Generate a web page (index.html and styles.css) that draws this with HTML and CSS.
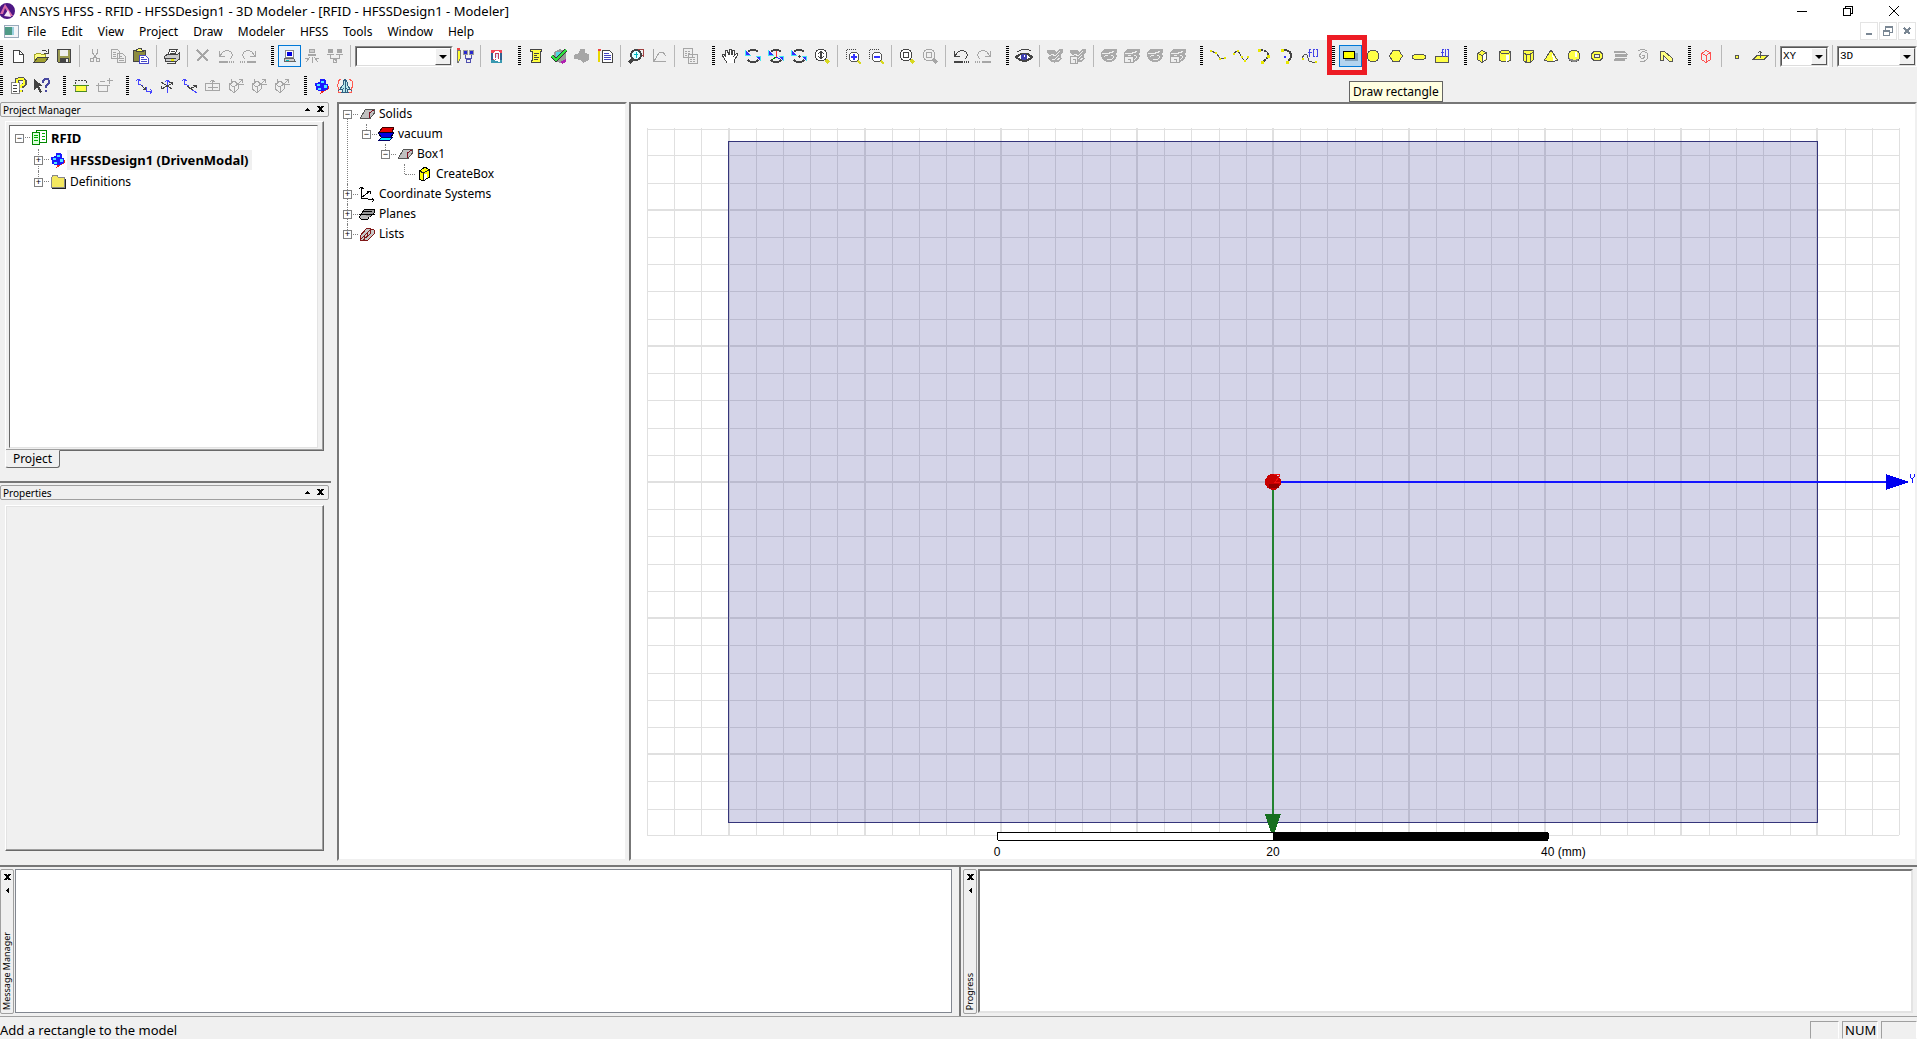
FILE: index.html
```html
<!DOCTYPE html>
<html lang="en">
<head>
<meta charset="utf-8">
<title>ANSYS HFSS - RFID - HFSSDesign1 - 3D Modeler</title>
<link rel="stylesheet" href="styles.css">
</head>
<body>
<svg class="defs" aria-hidden="true">
  <defs>
    <symbol id="new" viewBox="0 0 18 18"><path d="M4.500 3.500H10.500L14.500 7.500V15.500H4.500Z" fill="#fff" stroke="#444"/><path d="M10.500 3.500V7.500H14.500" fill="none" stroke="#444"/></symbol>
    <symbol id="open" viewBox="0 0 18 18"><path d="M2 15V7H4L5 6H8L9 7H13V10" fill="#ffff80" stroke="#a0a030"/><path d="M2 15L6 10H17L13 15Z" fill="#a0a030" stroke="#444"/><path d="M10 4Q13 2 15 5M16 2V6H12" fill="none" stroke="#444"/></symbol>
    <symbol id="save" viewBox="0 0 18 18"><path d="M2.500 2.500H15.500V15.500H3.500L2.500 14.500Z" fill="#9a9a50" stroke="#444"/><path d="M5 3H13V9H5Z" fill="#eee"/><path d="M5 11H14V15H5Z" fill="#444"/><path d="M11 12H13V15H11Z" fill="#eee"/></symbol>
    <symbol id="cut" viewBox="0 0 18 18"><path d="M6.500 2V6L11 12M11.500 2V6L7 12" fill="none" stroke="#a6a6a6"/><circle cx="6" cy="13" r="2" fill="none" stroke="#a6a6a6"/><circle cx="12" cy="13" r="2" fill="none" stroke="#a6a6a6"/></symbol>
    <symbol id="copy" viewBox="0 0 18 18"><path d="M2.500 2.500H8.500L10.500 4.500V11.500H2.500ZM8.500 6.500H13.500L16.500 9.500V15.500H8.500Z" fill="#eee" stroke="#a6a6a6"/><path d="M4 5.500H7M4 7.500H7M4 9.500H7M10 9.500H13M10 11.500H15M10 13.500H15" stroke="#a6a6a6"/></symbol>
    <symbol id="paste" viewBox="0 0 18 18"><path d="M1.500 3.500H13.500V14.500H1.500Z" fill="#8c8c40" stroke="#444"/><path d="M4.500 4.500V3L7 1.500H9L11.500 4.500Z" fill="#ffff60" stroke="#444"/><path d="M7.500 8.500H13.500L16.500 11.500V16.500H7.500Z" fill="#fff" stroke="#4646c8"/><path d="M9 10.500H12M9 12.500H15M9 14.500H15" stroke="#4646c8"/></symbol>
    <symbol id="print" viewBox="0 0 18 18"><path d="M5 8L7 2.500H14L12 8" fill="#fff" stroke="#444"/><path d="M8 4.500H12M7 6.500H12" stroke="#444"/><path d="M1.500 9.500L4 7.500H14L16.500 6V12L13 14.500H2.500Z" fill="#ccc" stroke="#444"/><path d="M2 11.500H13M4 16.500H12L14 14" stroke="#444" fill="none"/><path d="M8 13H11" stroke="#e8e800" stroke-width="2"/></symbol>
    <symbol id="delete" viewBox="0 0 18 18"><path d="M3 3L14 14M14 3L3 14" stroke="#a6a6a6" stroke-width="2"/></symbol>
    <symbol id="undo-g" viewBox="0 0 18 18"><path d="M2.500 4V9.500H8M3 9L6 5Q10 2 14 5Q17 9 13 12" fill="none" stroke="#a6a6a6"/><path d="M2 15H11" stroke="#a6a6a6" stroke-width="2"/><path d="M12 15H18" stroke="#a6a6a6" stroke-width="2" stroke-dasharray="1 1"/></symbol>
    <symbol id="redo-g" viewBox="0 0 18 18"><path d="M15.500 4V9.500H10M15 9L12 5Q8 2 4 5Q1 9 5 12" fill="none" stroke="#a6a6a6"/><path d="M7 15H16" stroke="#a6a6a6" stroke-width="2"/><path d="M0 15H6" stroke="#a6a6a6" stroke-width="2" stroke-dasharray="1 1"/></symbol>
    <symbol id="undo" viewBox="0 0 18 18"><path d="M2.500 4V9.500H8M3 9L6 5Q10 2 14 5Q17 9 13 12" fill="none" stroke="#444"/><path d="M2 15H11" stroke="#444" stroke-width="2"/><path d="M12 15H18" stroke="#444" stroke-width="2" stroke-dasharray="1 1"/></symbol>
    <symbol id="computer" viewBox="0 0 18 18"><path d="M5.500 3.500H13.500V10.500H5.500Z" fill="#fff" stroke="#888"/><path d="M7 5H12V9H7Z" fill="#0000e0"/><path d="M4.500 11.500H13.500L15.500 14.500H4.500Z" fill="#ccc" stroke="#666"/><path d="M6 13.500H9" stroke="#00c0c0"/></symbol>
    <symbol id="remote" viewBox="0 0 18 18"><path d="M6 2H12V6H6ZM5 7H13V9H5Z" fill="#a6a6a6"/><path d="M7 3H11V5H7Z" fill="#ccc"/><path d="M9 10V16M7 10L3 15M11 10L15 15M6 11L2 12M12 11L16 12" stroke="#a6a6a6"/></symbol>
    <symbol id="dist" viewBox="0 0 18 18"><path d="M2 2H7V6H2ZM11 2H16V6H11ZM1 7H8V8H1ZM10 7H17V8H10Z" fill="#a6a6a6"/><path d="M4.500 8V11.500H13.500V8M9 12V14M7.500 12.500H10.500V15.500H7.500Z" fill="none" stroke="#a6a6a6"/></symbol>
    <symbol id="netedit" viewBox="1 0 18 18"><path d="M2 3H5V12L3 16L2 13Z" fill="#ffff30" stroke="#777"/><path d="M2 2H5" stroke="#e44" stroke-width="2"/><path d="M8 3H12V7H8ZM14 3H18V7H14Z" fill="#2828d0" stroke="#999"/><path d="M10.500 8V11.500H16.500V8M13.500 11V13M11.500 12.500H15.500V15.500H11.500Z" fill="none" stroke="#5050b0"/></symbol>
    <symbol id="queue" viewBox="0 0 18 18"><path d="M4 3H15V16H4Z" fill="#306090"/><path d="M4 3H15V6H4Z" fill="#f04858"/><path d="M4 13H15V16H4Z" fill="#3898b0"/><path d="M6 5H13V13H6Z" fill="#f04858"/><path d="M8 4H11L13 6V12L11 14H8L6 12V6Z" fill="#fff"/><path d="M8 6H11V12H8Z" fill="#e0e4f8" stroke="#c04060"/><path d="M9 11L13 15" stroke="#fff" stroke-width="2"/></symbol>
    <symbol id="scroll" viewBox="0 0 18 18"><path d="M3.500 2.500H14.500V4.500H13.500V15.500H4.500V13.500H5.500V4.500H3.500Z" fill="#ffff40" stroke="#444"/><path d="M7 6.500H12M7 8.500H10M7 10.500H12M7 12.500H11" stroke="#444"/></symbol>
    <symbol id="check" viewBox="0 0 18 18"><path d="M4 5L10 2L16 5V12L10 16L4 13Z" fill="#999"/><path d="M6 5H11V10H6Z" fill="#50d8e0"/><path d="M10 15L16 12V15L12 17Z" fill="#b020b0"/><path d="M2 9L6 13L16 3" fill="none" stroke="#333" stroke-width="4"/><path d="M2 9L6 13L16 3" fill="none" stroke="#30e040" stroke-width="2"/></symbol>
    <symbol id="analyze" viewBox="0 0 18 18"><path d="M7 2H12V6L16 7V13L10 16L8 13L1 12V8L6 6Z" fill="#a6a6a6"/></symbol>
    <symbol id="notes" viewBox="0 0 18 18"><path d="M3 3V15" stroke="#e8d800" stroke-width="2"/><path d="M2 3H5" stroke="#e44" stroke-width="2"/><path d="M6.500 3.500H13.500L16.500 6.500V15.500H6.500Z" fill="#fff" stroke="#444"/><path d="M8 6.500H13M8 8.500H15M8 10.500H15M8 12.500H15" stroke="#4444c0"/></symbol>
    <symbol id="sweep" viewBox="0 0 18 18"><path d="M10 2.500H16.500V9L13 7" fill="none" stroke="#a04040"/><circle cx="9" cy="8" r="5" fill="#dff" stroke="#444" stroke-width="2"/><path d="M7 7.500H11M9.500 5V11" stroke="#00b8c0"/><path d="M6 12L2 16" stroke="#444" stroke-width="3"/></symbol>
    <symbol id="graph" viewBox="0 0 18 18"><path d="M3.500 2V14.500H16M4 14L9 6L13 5L16 9" fill="none" stroke="#a6a6a6"/></symbol>
    <symbol id="report" viewBox="0 0 18 18"><path d="M2.500 1.500H11.500V10.500H2.500ZM7.500 7.500H16.500V16.500H7.500Z" fill="#eee" stroke="#a6a6a6"/><path d="M4 4.500H9M4 6.500H9M4 8.500H7M9 10.500H15M9 12.500H15M9 14.500H15" stroke="#a6a6a6" stroke-dasharray="2 1"/></symbol>
    <symbol id="hand" viewBox="0 0 18 18"><path d="M6 16L3 11L1 8L3 7L5 10L4 4L6 3L8 8V2L10 2L11 8L12 3L14 4L13 9L16 6L17 8L13 13V16" fill="#fff" stroke="#444"/></symbol>
    <symbol id="rotate" viewBox="0 0 18 18"><path d="M4 5Q9 0 14 5M4 13Q9 18 14 13" fill="none" stroke="#444" stroke-width="2"/><path d="M1 3V9H7ZM17 15V9H11Z" fill="#45e8f0"/><path d="M2 4V8H6ZM16 14V10H12Z" fill="#3030ff"/></symbol>
    <symbol id="rotate-ax" viewBox="0 0 18 18"><use href="#rotate"/><path d="M9.500 4V10" stroke="#f33"/><path d="M9 10L5 13" stroke="#080"/><path d="M9 10L13 12" stroke="#22f"/></symbol>
    <symbol id="rotate-c" viewBox="0 0 18 18"><use href="#rotate"/><path d="M8 9.500H11M9.500 8V11" stroke="#444"/></symbol>
    <symbol id="zoom" viewBox="0 0 18 18"><circle cx="8" cy="8" r="6" fill="#fff" stroke="#444"/><path d="M8 5V11" stroke="#444" stroke-width="2"/><path d="M5 7L8 4L11 7M5 9L8 12L11 9" stroke="#444" fill="none"/><path d="M13 13L16 16" stroke="#d8d820" stroke-width="3"/></symbol>
    <symbol id="zoomin" viewBox="0 0 18 18"><path d="M2.500 12V2.500H12" fill="none" stroke="#444" stroke-dasharray="1 1"/><circle cx="10" cy="10" r="5" fill="#fff" stroke="#555"/><path d="M7 10H13M10 7V13" stroke="#33f" stroke-width="2"/><path d="M14 14L17 17" stroke="#d8d820" stroke-width="2"/></symbol>
    <symbol id="zoomout" viewBox="0 0 18 18"><path d="M2.500 12V2.500H12" fill="none" stroke="#444" stroke-dasharray="1 1"/><circle cx="10" cy="10" r="5" fill="#fff" stroke="#555"/><path d="M7 10H13" stroke="#33f" stroke-width="2"/><path d="M14 14L17 17" stroke="#d8d820" stroke-width="2"/></symbol>
    <symbol id="fit" viewBox="0 0 18 18"><circle cx="8" cy="8" r="6" fill="#fff" stroke="#444"/><path d="M5.500 5.500H10.500V10.500H5.500Z" fill="none" stroke="#444"/><path d="M13 13L16 16" stroke="#d8d820" stroke-width="3"/></symbol>
    <symbol id="fit-g" viewBox="0 0 18 18"><circle cx="8" cy="8" r="6" fill="none" stroke="#a6a6a6"/><path d="M5.500 5.500H10.500V10.500H5.500Z" fill="none" stroke="#a6a6a6"/><path d="M12 12L16 16" stroke="#a6a6a6" stroke-width="3"/></symbol>
    <symbol id="eye" viewBox="0 0 18 18"><path d="M1 10Q9 3 17 10Q9 18 1 10Z" fill="#fff" stroke="#444" stroke-width="2"/><circle cx="9" cy="10" r="3" fill="#4040b0"/><path d="M9.500 8V10" stroke="#fff"/><path d="M2 5Q9 0 16 4" fill="none" stroke="#444"/></symbol>
    <symbol id="hide" viewBox="0 0 18 18"><path d="M1 3H8L10 5L13 2H17V5L15 7V10L16 12Q11 17 5 15L1 11L4 8L1 6Z" fill="#aaa"/><path d="M4 9L6 7L9 9L14 4M6 12L8 13L13 8M11 13L14 11" fill="none" stroke="#eee"/></symbol>
    <symbol id="hide-box" viewBox="0 0 18 18"><use href="#hide"/><path d="M1.500 9.500H8.500V16.500H1.500ZM4 12.500H6.500V16" fill="#eee" stroke="#a6a6a6"/></symbol>
    <symbol id="eye-g" viewBox="0 0 18 18"><path d="M1 5L5 2H17V5L15 7L17 9Q14 16 8 15Q2 14 1 9Z" fill="#aaa"/><path d="M2 6.500H8L14 4.500M4 10L6 8H12L14 10L12 12L7 13" fill="none" stroke="#eee"/><path d="M8 8H11V11H8Z" fill="#aaa"/></symbol>
    <symbol id="eye-box" viewBox="0 0 18 18"><use href="#eye-g"/><path d="M1.500 9.500H10.500V15.500H1.500ZM5 12.500H7.500V15" fill="#eee" stroke="#a6a6a6"/></symbol>
    <symbol id="line" viewBox="0 0 18 18"><path d="M2 4L7 6L11 11L16 12" fill="none" stroke="#555"/><path d="M1 4H3M6 6H8M10 12H12M15 11H17" stroke="#e8e800" stroke-width="2"/></symbol>
    <symbol id="spline" viewBox="0 0 18 18"><path d="M2 7Q5 1 8 7T13 14L16 11" fill="none" stroke="#444"/><path d="M1 7H3M5 4H7M9 10H11M12 14H14M15 10H17" stroke="#e8e800" stroke-width="2"/></symbol>
    <symbol id="arc" viewBox="0 0 18 18"><path d="M5 3Q14 3 13 10L8 15" fill="none" stroke="#444" stroke-width="2" stroke-dasharray="3 1"/><path d="M3 3H6M12 9H15M6 15H9" stroke="#e8e800" stroke-width="3"/></symbol>
    <symbol id="arc-c" viewBox="0 0 18 18"><path d="M5 3Q14 3 13 10L10 15" fill="none" stroke="#444" stroke-width="2"/><path d="M3 3H6M8 15H11" stroke="#e8e800" stroke-width="3"/><path d="M6 10H8" stroke="#33f" stroke-width="2"/></symbol>
    <symbol id="func" viewBox="0 0 18 18"><path d="M1 11L4 7L6 8L8 14L14 16" fill="none" stroke="#555"/><path d="M1 12H3M14 15H16" stroke="#e8e800" stroke-width="2"/><path d="M10 2.500H8.500V10M7 5.500H11M14 2.500H12.500V9.500H14M15 2.500H16.500V9.500H15" fill="none" stroke="#4545e8"/></symbol>
    <symbol id="rect" viewBox="0 0 18 18"><path d="M4 6H17V14H4Z" fill="#7f9fba"/><path d="M2.500 4.500H13.500V11.500H2.500Z" fill="#ff0" stroke="#000"/></symbol>
    <symbol id="circle" viewBox="0 0 18 18"><circle cx="9" cy="9" r="6" fill="#ffff45" stroke="#555"/></symbol>
    <symbol id="poly" viewBox="0 0 18 18"><path d="M6 3.500H12L15.500 9L12 14.500H6L2.500 9Z" fill="#ffff45" stroke="#555"/></symbol>
    <symbol id="ellipse" viewBox="0 0 18 18"><ellipse cx="9" cy="10" rx="7" ry="3" fill="#ffff45" stroke="#555"/></symbol>
    <symbol id="funcrect" viewBox="0 0 18 18"><path d="M2.500 9.500H15.500V15.500H2.500Z" fill="#ffff45" stroke="#555"/><path d="M11 2.500H9.500V10M8 5.500H11M13 2.500H12.500V9.500H13M14 2.500H15.500V9.500H14" fill="none" stroke="#4545e8"/></symbol>
    <symbol id="box" viewBox="0 0 18 18"><path d="M4.500 6.500L9 3.500L13.500 5.500V12.500L9 15.500L4.500 12.500Z" fill="#ffff45" stroke="#555"/><path d="M9 8V15L13 12V6Z" fill="#fff"/><path d="M4.500 6.500L9 8.500L13.500 5.500M9 8V15" fill="none" stroke="#555"/></symbol>
    <symbol id="cyl" viewBox="0 0 18 18"><path d="M3.500 5Q9 1 14.500 5V13Q9 17 3.500 13Z" fill="#ffff45" stroke="#555"/><path d="M10 8H13V13L10 15Z" fill="#fff"/><path d="M3.500 5Q9 9 14.500 5" fill="none" stroke="#555"/></symbol>
    <symbol id="prism" viewBox="0 0 18 18"><path d="M4 3.500H14V13L11 15.500H7L4 13Z" fill="#ffff45" stroke="#555"/><path d="M4 5L7 7.500H11L14 5M7.500 8V15M11.500 8V15" fill="none" stroke="#555"/></symbol>
    <symbol id="cone" viewBox="0 0 18 18"><path d="M9 3L15.500 13Q9 17 2.500 13Z" fill="#ffff45" stroke="#555"/><path d="M10 6L14 13L11 14Z" fill="#fff"/></symbol>
    <symbol id="sphere" viewBox="0 0 18 18"><circle cx="9" cy="9" r="6" fill="#ffff45" stroke="#555"/><path d="M10 5H12V10H10Z" fill="#fff"/><path d="M4 12Q8 15 13 13" fill="none" stroke="#888" stroke-width="2"/></symbol>
    <symbol id="torus" viewBox="0 0 18 18"><ellipse cx="9" cy="9" rx="6" ry="5" fill="#ffff45" stroke="#555"/><ellipse cx="9" cy="9" rx="3" ry="2" fill="#eee" stroke="#555"/></symbol>
    <symbol id="helix" viewBox="0 0 18 18"><path d="M3 5H14M4 9H16M3 13H14" stroke="#a6a6a6" stroke-width="2"/><path d="M14 5L16 7L4 7M14 11L16 11L4 11" fill="none" stroke="#a6a6a6"/></symbol>
    <symbol id="spiral" viewBox="0 0 18 18"><path d="M8 9Q10 7 11 9Q10 12 7 11Q4 8 8 5Q14 4 14 9Q13 15 6 15" fill="none" stroke="#a6a6a6"/><path d="M4 4Q9 1 13 4" fill="none" stroke="#a6a6a6"/></symbol>
    <symbol id="bond" viewBox="0 0 18 18"><path d="M3.500 13V4H7L15 11V14H12L6 8V13Z" fill="#ffff80" stroke="#555"/></symbol>
    <symbol id="region" viewBox="0 0 18 18"><path d="M4.500 6.500L9 3.500L13.500 5.500V12.500L9 15.500L4.500 12.500ZM4.500 6.500L9 8.500L13.500 5.500M9 8V15" fill="none" stroke="#ff5050"/></symbol>
    <symbol id="point" viewBox="0 0 18 18"><circle cx="9" cy="10" r="2" fill="#ffff45" stroke="#555"/></symbol>
    <symbol id="plane" viewBox="0 0 18 18"><path d="M2 12.500L6 8.500H17L13 12.500Z" fill="#ffff45" stroke="#555"/><path d="M9.500 11V4M7 6L9 4L11 6" fill="none" stroke="#555"/></symbol>
    <symbol id="help" viewBox="0 0 18 18"><path d="M2.500 5.500H10V16.500H2.500Z" fill="#fff" stroke="#888"/><path d="M4 8.500H8M4 11.500H8M4 14.500H8" stroke="#444"/><path d="M8 6V3L10 2H14L16 4V7L13 9V11M12 13V15" fill="none" stroke="#555" stroke-width="4"/><path d="M8 6V3L10 2H14L15 4V7L12 9V11M12 13V15" fill="none" stroke="#ffff30" stroke-width="2"/></symbol>
    <symbol id="whats" viewBox="0 0 18 18"><path d="M2 2V13L5 10L8 16L10 15L7 9H11Z" fill="#444"/><path d="M11 6V4L13 2H16L17 4V6L14 9V11M14 13V15" fill="none" stroke="#4848a0" stroke-width="2"/></symbol>
    <symbol id="mat" viewBox="0 0 18 18"><path d="M3.500 7V3.500H14.500V7" fill="none" stroke="#444" stroke-dasharray="2 1"/><path d="M3 8H15V15H3Z" fill="#ffff45"/><path d="M1 8.500H17M3 14.500H15" stroke="#4a8a20"/><path d="M3.500 9V14M14.500 9V14" stroke="#777"/></symbol>
    <symbol id="mat-g" viewBox="0 0 18 18"><path d="M3.500 6V14.500H12.500V9M5 4.500H10M1 8.500H15M14.500 1V7M12 3.500H18" fill="none" stroke="#a6a6a6"/></symbol>
    <symbol id="cs1" viewBox="0 0 18 18"><path d="M3.500 2V7.500L8 8.500M1 4L3 2L6 4M11.500 10V14.500H17M15 12L17 14L15 17" fill="none" stroke="#4545ff"/><path d="M6 8L11 13M8 12.500H10.500V10" fill="none" stroke="#444"/></symbol>
    <symbol id="cs2" viewBox="0 0 18 18"><path d="M9.500 16V3M7 5L9 3L12 5" fill="none" stroke="#4545ff"/><path d="M3 5L14 12M3 12L15 6M11 5.500H14.500V8M3.500 9V11.500H6" fill="none" stroke="#444"/></symbol>
    <symbol id="cs3" viewBox="0 0 18 18"><path d="M3.500 2V7.500L8 8.500M1 4L3 2L6 4M10 12L16 16" fill="none" stroke="#4545ff"/><path d="M6 9L12 13M8 12L15 9M12 8.500H15.500V11" fill="none" stroke="#444"/></symbol>
    <symbol id="cs-face" viewBox="0 0 18 18"><path d="M1.500 6.500H15.500V13.500H1.500ZM8.500 14V3M6 5L8 3L11 5M4 10.500H14" fill="none" stroke="#a6a6a6"/></symbol>
    <symbol id="cs-g" viewBox="0 0 18 18"><path d="M2.500 7L7 4L11 7V12L7 16L2.500 12ZM2 7L7 10L11 7M7 10V16M10 8L16 2M12 2.500H15.500V6M4.500 2V7M17 7.500H11" fill="none" stroke="#a6a6a6"/></symbol>
    <symbol id="cubes" viewBox="0 0 18 18"><path d="M7 17L16 12V9L9 13Z" fill="#e22"/><path d="M7 2H12L13 4V7H15V12L11 14H6L3 13V9H2V6L7 5Z" fill="#1a1aff"/><path d="M8 4H11V6H8ZM4 7H7V9H4ZM11 8H14V11H11ZM5 11H8V13H5Z" fill="#50e8ff"/></symbol>
    <symbol id="plane3d" viewBox="0 0 18 18"><path d="M5 2L2 4V7L1 8L3 12L2 15L5 16M13 2L16 4V7L17 9L15 12L16 15L13 16" fill="none" stroke="#ff5a50"/><path d="M9 2L11 5V8L15 13L11 12L12 15H6L7 12L3 13L7 8V5Z" fill="#b8e8ec" stroke="#306080"/><path d="M9.500 3V15" stroke="#306080"/></symbol>
    <symbol id="t-project" viewBox="0 0 18 18"><path d="M6.500 1.500H16.500V13.500H6.500Z" fill="#fff" stroke="#080"/><path d="M2.500 3.500H9.500V15.500H2.500Z" fill="#dfd" stroke="#080"/><path d="M4 6.500H8M4 8.500H8M4 11.500H8M12 4.500H15M12 7.500H15M12 10.500H15" stroke="#00b000"/></symbol>
    <symbol id="t-folder" viewBox="0 0 18 18"><path d="M2.500 14.500V4.500L4 2.500H8L9.500 4.500H15.500V14.500Z" fill="#f4e860" stroke="#888"/><path d="M3 15.500H16.500V6" stroke="#222" fill="none"/></symbol>
    <symbol id="t-solid" viewBox="0 0 18 18"><path d="M2.500 12.500L7.500 4.500H16.500V8L12 13.500H2.500Z" fill="#c0c0c0" stroke="#555"/><path d="M11 13V8L16 5" fill="none" stroke="#801020"/></symbol>
    <symbol id="t-vac" viewBox="0 0 18 18"><path d="M2 7L6 2H17L15 7Z" fill="#e00000" stroke="#400"/><path d="M1 7H14L17 8L14 12H4Z" fill="#0000e0" stroke="#002"/><path d="M2 15L5 12H16L13 15Z" fill="#00f0ff" stroke="#006"/></symbol>
    <symbol id="t-box" viewBox="0 0 18 18"><path d="M4.500 6L10 2L14.500 5V12L8 16L4.500 14Z" fill="#ff0" stroke="#000"/><path d="M9 9H12V13L9 15Z" fill="#fff"/><path d="M5 6L8 8L14 5M8.500 8V15" fill="none" stroke="#222"/></symbol>
    <symbol id="t-cs" viewBox="0 0 18 18"><path d="M3.500 2V13L16 15M3 13L12 6M1 4L3 2L6 4M9 6.500H12.500V9M14 13L16 15L14 17" fill="none" stroke="#000"/></symbol>
    <symbol id="t-planes" viewBox="0 0 18 18"><path d="M1 12L5 8H13L10 14H3Z" fill="#bbb" stroke="#000"/><path d="M3 9L7 4H16V8L12 12" fill="#999" stroke="#000"/><path d="M1 9.500H17M5 6.500H14" stroke="#000"/></symbol>
    <symbol id="t-lists" viewBox="0 0 18 18"><path d="M2 11L9 3L16 5V9L9 16L2 15Z" fill="#c8c8c8" stroke="#801818"/><path d="M3 14L13 4M6 11L7 15M9 8L10 12M12 5V9L5 15" stroke="#801818" fill="none"/></symbol>
  </defs>
</svg>

<header class="titlebar">
  <svg class="logo" viewBox="0 0 16 18"><circle cx="7" cy="9" r="8" fill="#4c1684"/><path d="M0 12L5 2L13 14H10L5 6L3 12Z" fill="#d76aa8"/><path d="M4 14L8 8L11 15Z" fill="#f5e7f5"/></svg>
  <h1 class="title">ANSYS HFSS - RFID - HFSSDesign1 - 3D Modeler - [RFID - HFSSDesign1 - Modeler]</h1>
  <div class="winbtns">
    <button aria-label="Minimize"><svg viewBox="0 0 12 12"><path d="M1 6.500H11" stroke="#000"/></svg></button>
    <button aria-label="Restore"><svg viewBox="0 0 12 12"><path d="M1.500 3.500H8.500V10.500H1.500ZM3.500 3V1.500H10.500V8.500H9" fill="none" stroke="#000"/></svg></button>
    <button aria-label="Close"><svg class="smooth" viewBox="0 0 12 12"><path d="M1 1L11 11M11 1L1 11" stroke="#000"/></svg></button>
  </div>
</header>

<nav class="menubar">
  <svg class="docicon" viewBox="0 0 16 14"><path d="M1 1H15V13H1Z" fill="#f4f4f8" stroke="#9ab"/><path d="M2 3H9V11H2Z" fill="#4f9a86"/><path d="M9 3H11V11H9Z" fill="#9ad0e0"/></svg>
  <button>File</button><button>Edit</button><button>View</button><button>Project</button><button>Draw</button><button>Modeler</button><button>HFSS</button><button>Tools</button><button>Window</button><button>Help</button>
  <div class="mdibtns">
    <button aria-label="Minimize document"><svg viewBox="0 0 12 12"><path d="M3 9H9" stroke="#7a8794" stroke-width="2"/></svg></button>
    <button aria-label="Restore document"><svg viewBox="0 0 12 12"><path d="M1.500 5.500H7.500V10.500H1.500ZM3.500 5V2.500H10.500V7.500H8" fill="none" stroke="#7a8794"/><path d="M3 2H11M1 5.500H8" stroke="#7a8794" stroke-width="2"/></svg></button>
    <button aria-label="Close document"><svg viewBox="0 0 12 12"><path d="M3 3L9 9M9 3L3 9" stroke="#7a8794" stroke-width="2"/></svg></button>
  </div>
</nav>

<div class="toolbars">
  <div class="toolrow">
    <div class="group"><i class="grip"></i>
      <button class="tool" aria-label="New"><svg><use href="#new"/></svg></button><button class="tool" aria-label="Open"><svg><use href="#open"/></svg></button><button class="tool" aria-label="Save"><svg><use href="#save"/></svg></button><i class="sep"></i>
      <button class="tool" aria-label="Cut"><svg><use href="#cut"/></svg></button><button class="tool" aria-label="Copy"><svg><use href="#copy"/></svg></button><button class="tool" aria-label="Paste"><svg><use href="#paste"/></svg></button><i class="sep"></i>
      <button class="tool" aria-label="Print"><svg><use href="#print"/></svg></button><i class="sep"></i>
      <button class="tool" aria-label="Delete"><svg><use href="#delete"/></svg></button><button class="tool" aria-label="Undo"><svg><use href="#undo-g"/></svg></button><button class="tool" aria-label="Redo"><svg><use href="#redo-g"/></svg></button>
    </div>
    <div class="group"><i class="grip"></i>
      <button class="tool local" aria-label="Local machine"><svg><use href="#computer"/></svg></button><button class="tool" aria-label="Remote"><svg><use href="#remote"/></svg></button><button class="tool" aria-label="Distributed"><svg><use href="#dist"/></svg></button><i class="sep"></i>
      <span class="combo machine"><select aria-label="Machine"><option></option></select></span>
      <button class="tool" aria-label="Edit distributed machines"><svg><use href="#netedit"/></svg></button><i class="sep"></i><button class="tool" aria-label="Queue"><svg><use href="#queue"/></svg></button>
    </div>
    <div class="group"><i class="grip"></i>
      <button class="tool" aria-label="Setup"><svg><use href="#scroll"/></svg></button><button class="tool" aria-label="Validate"><svg><use href="#check"/></svg></button><button class="tool" aria-label="Analyze all"><svg><use href="#analyze"/></svg></button><button class="tool" aria-label="Edit notes"><svg><use href="#notes"/></svg></button><i class="sep"></i>
      <button class="tool" aria-label="Solution data"><svg><use href="#sweep"/></svg></button><button class="tool" aria-label="Results"><svg><use href="#graph"/></svg></button><i class="sep"></i><button class="tool" aria-label="Copy image"><svg><use href="#report"/></svg></button>
    </div>
    <div class="group"><i class="grip"></i>
      <button class="tool" aria-label="Pan"><svg><use href="#hand"/></svg></button><button class="tool" aria-label="Rotate model"><svg><use href="#rotate"/></svg></button><button class="tool" aria-label="Rotate axis"><svg><use href="#rotate-ax"/></svg></button><button class="tool" aria-label="Rotate screen"><svg><use href="#rotate-c"/></svg></button><button class="tool" aria-label="Zoom"><svg><use href="#zoom"/></svg></button><i class="sep"></i>
      <button class="tool" aria-label="Zoom in"><svg><use href="#zoomin"/></svg></button><button class="tool" aria-label="Zoom out"><svg><use href="#zoomout"/></svg></button><i class="sep"></i>
      <button class="tool" aria-label="Fit all"><svg><use href="#fit"/></svg></button><button class="tool" aria-label="Fit selection"><svg><use href="#fit-g"/></svg></button><i class="sep"></i>
      <button class="tool" aria-label="Undo view"><svg><use href="#undo"/></svg></button><button class="tool" aria-label="Redo view"><svg><use href="#redo-g"/></svg></button>
    </div>
    <div class="group"><i class="grip"></i>
      <button class="tool" aria-label="Visibility"><svg><use href="#eye"/></svg></button><i class="sep"></i>
      <button class="tool" aria-label="Hide"><svg><use href="#hide"/></svg></button><button class="tool" aria-label="Hide in all views"><svg><use href="#hide-box"/></svg></button><i class="sep"></i>
      <button class="tool" aria-label="Show"><svg><use href="#eye-g"/></svg></button><button class="tool" aria-label="Show in all views"><svg><use href="#eye-box"/></svg></button><button class="tool" aria-label="Show all"><svg><use href="#eye-g"/></svg></button><button class="tool" aria-label="Show all in all views"><svg><use href="#eye-box"/></svg></button>
    </div>
    <div class="group"><i class="grip"></i>
      <button class="tool" aria-label="Line"><svg><use href="#line"/></svg></button><button class="tool" aria-label="Spline"><svg><use href="#spline"/></svg></button><button class="tool" aria-label="Three point arc"><svg><use href="#arc"/></svg></button><button class="tool" aria-label="Center arc"><svg><use href="#arc-c"/></svg></button><button class="tool" aria-label="Equation curve"><svg><use href="#func"/></svg></button>
    </div>
    <div class="group"><i class="grip"></i>
      <span class="callout"><button class="tool active" aria-describedby="tip" aria-label="Rectangle"><svg><use href="#rect"/></svg></button><span class="tooltip" id="tip" role="tooltip">Draw rectangle</span></span><button class="tool" aria-label="Circle"><svg><use href="#circle"/></svg></button><button class="tool" aria-label="Regular polygon"><svg><use href="#poly"/></svg></button><button class="tool" aria-label="Ellipse"><svg><use href="#ellipse"/></svg></button><button class="tool" aria-label="Equation surface"><svg><use href="#funcrect"/></svg></button>
    </div>
    <div class="group"><i class="grip"></i>
      <button class="tool" aria-label="Box"><svg><use href="#box"/></svg></button><button class="tool" aria-label="Cylinder"><svg><use href="#cyl"/></svg></button><button class="tool" aria-label="Regular polyhedron"><svg><use href="#prism"/></svg></button><button class="tool" aria-label="Cone"><svg><use href="#cone"/></svg></button><button class="tool" aria-label="Sphere"><svg><use href="#sphere"/></svg></button><button class="tool" aria-label="Torus"><svg><use href="#torus"/></svg></button><button class="tool" aria-label="Helix"><svg><use href="#helix"/></svg></button><button class="tool" aria-label="Spiral"><svg><use href="#spiral"/></svg></button><button class="tool" aria-label="Bondwire"><svg><use href="#bond"/></svg></button>
    </div>
    <div class="group last"><i class="grip"></i>
      <button class="tool" aria-label="Region"><svg><use href="#region"/></svg></button><i class="sep"></i>
      <button class="tool" aria-label="Point"><svg><use href="#point"/></svg></button><button class="tool" aria-label="Plane"><svg><use href="#plane"/></svg></button><i class="sep"></i>
      <span class="combo axis"><select aria-label="Drawing plane"><option>XY</option></select></span><i class="sep"></i>
      <span class="combo mode"><select aria-label="Movement mode"><option>3D</option></select></span>
    </div>
  </div>
  <div class="toolrow">
    <div class="group"><i class="grip"></i><button class="tool" aria-label="Help topics"><svg><use href="#help"/></svg></button><button class="tool" aria-label="What's this"><svg><use href="#whats"/></svg></button></div>
    <div class="group"><i class="grip"></i><button class="tool" aria-label="Layer"><svg><use href="#mat"/></svg></button><button class="tool" aria-label="Add layer"><svg><use href="#mat-g"/></svg></button></div>
    <div class="group"><i class="grip"></i><button class="tool" aria-label="Offset coordinate system"><svg><use href="#cs1"/></svg></button><button class="tool" aria-label="Rotated coordinate system"><svg><use href="#cs2"/></svg></button><button class="tool" aria-label="Offset and rotated"><svg><use href="#cs3"/></svg></button><button class="tool" aria-label="Face coordinate system"><svg><use href="#cs-face"/></svg></button><button class="tool" aria-label="Object offset"><svg><use href="#cs-g"/></svg></button><button class="tool" aria-label="Object rotated"><svg><use href="#cs-g"/></svg></button><button class="tool" aria-label="Object both"><svg><use href="#cs-g"/></svg></button></div>
    <div class="group"><i class="grip"></i><button class="tool" aria-label="Insert HFSS design"><svg><use href="#cubes"/></svg></button><button class="tool" aria-label="Insert HFSS-IE design"><svg><use href="#plane3d"/></svg></button></div>
  </div>
</div>

<main class="workspace">
  <div class="leftdock">
    <section class="dock project">
      <h2 class="caption">Project Manager<span class="capbtns"><button aria-label="Collapse"><svg viewBox="0 0 9 9"><path d="M2 6H7L4.500 3Z"/></svg></button><button aria-label="Close"><svg viewBox="0 0 9 9"><path d="M2 1L7 7M7 1L2 7" stroke="#000" stroke-width="2"/></svg></button></span></h2>
      <div class="tabpage">
        <div class="treebox">
          <ul class="tree big">
            <li><div class="row"><button class="toggle" aria-label="Collapse RFID">−</button><svg><use href="#t-project"/></svg><span class="bold">RFID</span></div>
              <ul>
                <li><div class="row"><button class="toggle" aria-label="Expand HFSSDesign1">+</button><svg><use href="#cubes"/></svg><span class="bold picked">HFSSDesign1 (DrivenModal)</span></div></li>
                <li><div class="row"><button class="toggle" aria-label="Expand Definitions">+</button><svg><use href="#t-folder"/></svg><span>Definitions</span></div></li>
              </ul>
            </li>
          </ul>
        </div>
      </div>
      <button class="tab">Project</button>
    </section>
    <section class="dock props">
      <h2 class="caption">Properties<span class="capbtns"><button aria-label="Collapse"><svg viewBox="0 0 9 9"><path d="M2 6H7L4.500 3Z"/></svg></button><button aria-label="Close"><svg viewBox="0 0 9 9"><path d="M2 1L7 7M7 1L2 7" stroke="#000" stroke-width="2"/></svg></button></span></h2>
      <div class="propbox"></div>
    </section>
  </div>
  <section class="modeltree">
    <ul class="tree">
      <li><div class="row"><button class="toggle" aria-label="Collapse Solids">−</button><svg><use href="#t-solid"/></svg><span>Solids</span></div>
        <ul><li><div class="row"><button class="toggle" aria-label="Collapse vacuum">−</button><svg><use href="#t-vac"/></svg><span>vacuum</span></div>
          <ul><li><div class="row"><button class="toggle" aria-label="Collapse Box1">−</button><svg><use href="#t-solid"/></svg><span>Box1</span></div>
            <ul><li><div class="row leaf"><svg><use href="#t-box"/></svg><span>CreateBox</span></div></li></ul>
          </li></ul>
        </li></ul>
      </li>
      <li><div class="row"><button class="toggle" aria-label="Expand Coordinate Systems">+</button><svg><use href="#t-cs"/></svg><span>Coordinate Systems</span></div></li>
      <li><div class="row"><button class="toggle" aria-label="Expand Planes">+</button><svg><use href="#t-planes"/></svg><span>Planes</span></div></li>
      <li><div class="row"><button class="toggle" aria-label="Expand Lists">+</button><svg><use href="#t-lists"/></svg><span>Lists</span></div></li>
    </ul>
  </section>
  <section class="canvas">
    <svg class="scene" viewBox="0 0 1284 755" role="img" aria-label="Top view of Box1">
      <defs>
        <g id="vlines" fill="none" stroke="#e0e0e0">
          <path d="M27-354V353M54-354V353M82-354V353M109-354V353M163-354V353M191-354V353M218-354V353M245-354V353M299-354V353M327-354V353M354-354V353M381-354V353M436-354V353M463-354V353M490-354V353M517-354V353M572-354V353M599-354V353M626-354V353"/>
          <path stroke-width="2" d="M136-354V353M272-354V353M408-354V353M544-354V353"/>
        </g>
        <g id="hlines" fill="none" stroke="#e0e0e0">
          <path d="M-626 27H626M-626 54H626M-626 82H626M-626 109H626M-626 163H626M-626 191H626M-626 218H626M-626 245H626M-626 299H626M-626 327H626M-626 353H626"/>
          <path stroke-width="2" d="M-626 136H626M-626 272H626"/>
        </g>
      </defs>
      <g transform="translate(642 378)">
        <use href="#vlines"/><use href="#vlines" transform="scale(-1 1)"/>
        <use href="#hlines"/><use href="#hlines" transform="scale(1 -1)"/>
        <path d="M0-354V353M-626 0H626" stroke="#e0e0e0" stroke-width="2"/>
        <rect x="-545" y="-341" width="1089" height="681" fill="#28288c" fill-opacity=".2" stroke="#35357a"/>
        <path d="M0 0V336" stroke="#238230" stroke-width="2"/>
        <path d="M-8 332H8L2 350H-2Z" fill="#17701f"/>
        <path d="M0 0H614" stroke="#1414ff" stroke-width="2"/>
        <path d="M613-8V8L636 0Z" fill="#0000f0"/>
        <path d="M637-8V-5L639-3V1M641-8V-5L639-3" fill="none" stroke="#1414ff"/>
        <circle r="8" fill="#c80000"/><path d="M-4 2H6V6H-4Z" fill="#900000"/>
        <path d="M1-8H6V-5L2 0H7" fill="none" stroke="#f01010"/>
      </g>
      <rect x="366" y="728" width="551" height="8" rx="1" fill="#fff" stroke="#000"/>
      <path d="M642 728H917V737H642Z"/>
      <g class="scale"><text x="366" y="752" text-anchor="middle">0</text><text x="642" y="752" text-anchor="middle">20</text><text x="910" y="752">40 (mm)</text></g>
    </svg>
  </section>
</main>

<div class="bottomdock">
  <section class="vdock messages">
    <div class="vcaption"><button aria-label="Close"><svg viewBox="0 0 9 9"><path d="M2 1L7 7M7 1L2 7" stroke="#000" stroke-width="2"/></svg></button><button aria-label="Collapse"><svg viewBox="0 0 9 9"><path d="M6 2V7L3 4.500Z"/></svg></button><h2>Message Manager</h2></div>
    <div class="output flat"></div>
  </section>
  <section class="vdock progress">
    <div class="vcaption"><button aria-label="Close"><svg viewBox="0 0 9 9"><path d="M2 1L7 7M7 1L2 7" stroke="#000" stroke-width="2"/></svg></button><button aria-label="Collapse"><svg viewBox="0 0 9 9"><path d="M6 2V7L3 4.500Z"/></svg></button><h2>Progress</h2></div>
    <div class="output"></div>
  </section>
</div>

<footer class="status">
  <p>Add a rectangle to the model</p>
  <span class="cell small"></span><span class="cell">NUM</span><span class="cell"></span>
</footer>
</body>
</html>
```
FILE: styles.css
```css
*, *::before, *::after { box-sizing: border-box; }
html, body { height: 100%; }
body {
  margin: 0;
  display: flex;
  flex-direction: column;
  background: #f0f0f0;
  color: #000;
  font: 12px/16px "Noto Sans", "Open Sans", sans-serif;
  overflow: hidden;
}
button {
  margin: 0; padding: 0; border: 0;
  background: none; color: inherit; font: inherit;
}
svg { display: block; flex: none; shape-rendering: crispEdges; }
h1, h2, p, ul { margin: 0; padding: 0; font-weight: normal; list-style: none; }
.smooth { shape-rendering: auto; }
.defs { position: absolute; width: 0; height: 0; }

/* Title and menu */
.titlebar { display: flex; align-items: center; height: 22px; background: #fff; }
.logo { width: 16px; height: 18px; margin-right: 4px; shape-rendering: auto; }
.title { flex: 1; font-size: 13px; white-space: nowrap; }
.winbtns { display: flex; height: 20px; }
.winbtns button { width: 46px; display: grid; place-items: center; }
.winbtns svg { width: 12px; height: 12px; }
.menubar { display: flex; align-items: center; height: 18px; padding-left: 3px; background: #fff; }
.menubar > button { margin-right: 15px; padding-top: 2px; }
.docicon { width: 16px; height: 14px; margin-right: 8px; }
.mdibtns { display: flex; gap: 1px; margin-left: auto; margin-right: 1px; }
.mdibtns button { width: 18px; height: 18px; border: 1px solid #e4e4e4; display: grid; place-items: center; }
.mdibtns svg { width: 12px; height: 12px; }

/* Toolbars */
.toolbars { padding: 1px 0 0; }
.toolrow { display: flex; height: 30px; }
.group { display: flex; align-items: center; padding-right: 10px; }
.group.last { padding-right: 0; flex: 1; }
.grip {
  width: 3px; height: 20px; margin-right: 4px;
  background: repeating-linear-gradient(#000 0 1px, transparent 1px 2px);
}
.sep { width: 1px; height: 22px; margin: 0 4px 0 3px; background: #b8b8b8; }
.tool { width: 23px; height: 22px; display: grid; place-items: center; }
.tool svg { width: 18px; height: 18px; margin-right: 1px; }
.local { border: 1px solid #0078d7; background: #e5f1fb; }
.active { border: 1px solid #0078d7; background: #b3d4ef; }
.callout { position: relative; z-index: 2; }
.callout::before {
  content: ""; position: absolute; left: -12px; top: -10px;
  width: 40px; height: 40px; border: 5px solid #ed1c24; pointer-events: none;
}
.tooltip {
  position: absolute; left: 10px; top: 36px; height: 21px; padding: 0 3px;
  border: 1px solid #646464; background: #ffffe1; line-height: 19px; white-space: nowrap;
}
.combo {
  position: relative; height: 21px;
  border: 1px solid; border-color: #888 #fff #fff #888;
}
.combo select {
  appearance: none; display: block; width: 100%; height: 100%; padding: 0 0 0 1px;
  border: 1px solid; border-color: #555 #ddd #ddd #555; border-radius: 0;
  background: #fff; color: #000; font: 11px/14px "Liberation Mono", monospace;
}
.combo::before {
  content: ""; position: absolute; right: 1px; top: 1px; bottom: 1px; width: 16px;
  background: #f0f0f0; border: 1px solid; border-color: #fff #555 #555 #fff; pointer-events: none;
}
.combo::after {
  content: ""; position: absolute; right: 5px; top: 8px; width: 8px; height: 4px;
  border: 4px solid transparent; border-top-color: #000; border-bottom: 0; pointer-events: none;
}
.machine { width: 98px; margin-right: 1px; }
.axis { width: 49px; }
.mode { flex: 1; min-width: 60px; }

/* Docked panes */
.workspace { flex: 1; min-height: 0; display: flex; }
.leftdock { width: 331px; display: flex; flex-direction: column; margin-right: 6px; }
.dock { display: flex; flex-direction: column; padding-right: 2px; }
.project { height: 382px; padding-top: 1px; border-bottom: 2px solid #777; }
.props { flex: 1; padding-top: 2px; }
.caption {
  display: flex; align-items: center; height: 15px; padding-left: 2px;
  border: 1px solid #a0a0a0; border-radius: 2px; font-size: 10px; line-height: 12px;
}
.capbtns { display: flex; gap: 4px; margin-left: auto; margin-right: 3px; }
.capbtns svg, .vcaption svg { width: 9px; height: 9px; }
.tabpage {
  flex: 1; display: flex; margin: 4px 5px 0; padding: 3px 2px 2px 3px;
  border: 1px solid; border-color: #fff #696969 #696969 #fff;
  box-shadow: inset -1px -1px #a0a0a0;
}
.treebox {
  flex: 1; margin-right: 3px; padding: 1px 0 0 5px; background: #fff;
  border: 1px solid; border-color: #696969 #e3e3e3 #e3e3e3 #696969;
}
.tab {
  width: 55px; height: 18px; margin: -1px 0 13px 5px; background: #f0f0f0; z-index: 1;
  border: 1px solid; border-color: transparent #696969 #696969 #fff; border-radius: 0 0 3px 3px; line-height: 16px;
}
.propbox {
  flex: 1; margin: 5px 5px 14px; border: 1px solid;
  border-color: #fff #696969 #696969 #fff; box-shadow: inset -1px -1px #a0a0a0, inset 1px 1px #e3e3e3;
}
.modeltree { width: 290px; padding: 0 0 0 4px; margin-right: 2px; background: #fff; }
.modeltree, .canvas {
  margin-top: 1px; margin-bottom: 4px;
  border: 2px solid; border-color: #777 #f0f0f0 #f0f0f0 #777;
}
.canvas { flex: 1; min-width: 0; background: #fff; }
.scene { width: 100%; height: 100%; }
.scale { font: 12px "Liberation Sans", Arial, sans-serif; }

/* Trees */
.tree ul { padding-left: 19px; }
.tree li { position: relative; }
.tree li::before {
  content: ""; position: absolute; left: 4px; top: 0; height: 100%;
  border-left: 1px dotted #808080;
}
.tree li:last-child::before { height: 10px; }
.tree > li:first-child::before { top: 10px; height: calc(100% - 10px); }
.tree > li:only-child::before { display: none; }
.row { position: relative; display: flex; align-items: center; height: 20px; }
.row::before {
  content: ""; position: absolute; left: 5px; top: 10px; width: 10px; border-top: 1px dotted #808080;
}
.big .row { height: 22px; }
.row svg { width: 18px; height: 18px; margin: 0 2px 0 6px; position: relative; }
.row span { padding: 0 3px; line-height: 20px; white-space: nowrap; margin-left: -2px; }
.leaf { padding-left: 9px; }
.toggle {
  position: relative; width: 9px; height: 9px; border: 1px solid #808080; background: #fff;
  font: 9px/7px "Liberation Sans", sans-serif; text-align: center;
}
.row .bold { font-weight: bold; font-size: 13px; }
.picked { background: #f0f0f0; }

/* Bottom panes */
.bottomdock { display: flex; height: 152px; border-top: 2px solid #777; border-bottom: 1px solid #a0a0a0; }
.vdock { display: flex; padding: 2px 0 2px; }
.messages { flex: 959; padding-right: 7px; border-right: 2px solid #777; }
.progress { flex: 956; padding-left: 2px; padding-right: 4px; }
.vcaption {
  width: 14px; display: flex; flex-direction: column; align-items: center; gap: 4px;
  padding: 3px 0 3px; border: 1px solid #a0a0a0; border-radius: 2px;
}
.vcaption h2 {
  margin-top: auto; writing-mode: vertical-rl; transform: rotate(180deg);
  font-size: 9px; line-height: 12px;
}
.output {
  flex: 1; margin: 0 0 1px 1px; background: #fff;
  border: 2px solid; border-color: #777 #e3e3e3 #e3e3e3 #777;
}
.flat { border: 1px solid #828790; }

/* Status bar */
.status { display: flex; height: 22px; padding-top: 4px; gap: 3px; }
.status p { flex: 1; font-size: 13px; line-height: 18px; }
.cell {
  width: 36px; padding-left: 2px; font-size: 13px; line-height: 17px;
  border: 1px solid; border-color: #a0a0a0 #fff transparent #a0a0a0;
}
.small { width: 29px; }
```
